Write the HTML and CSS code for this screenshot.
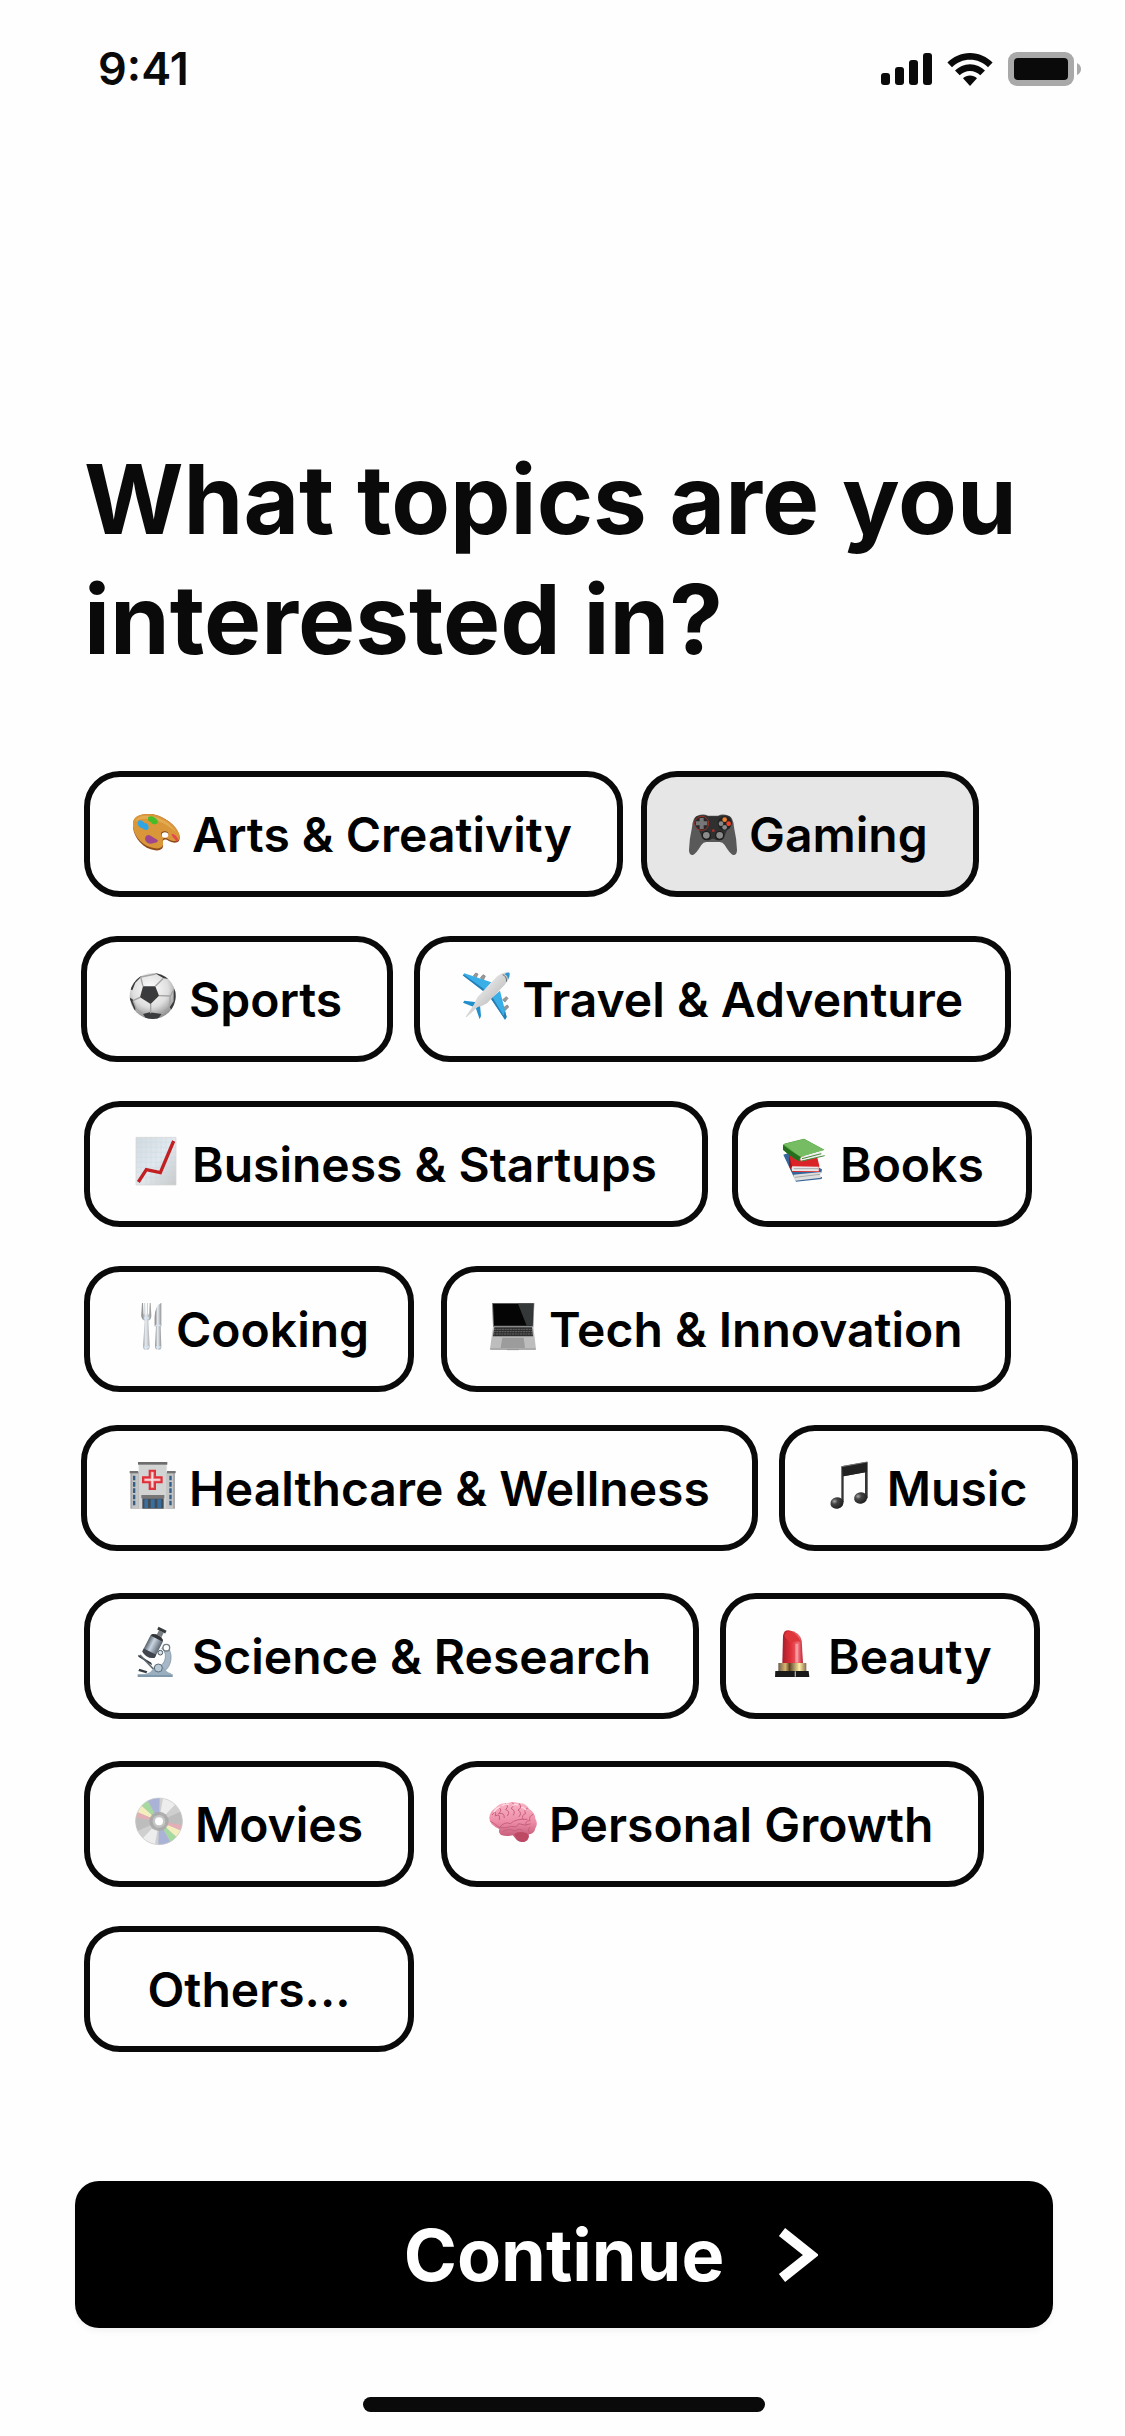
FILE: index.html
```html
<!DOCTYPE html>
<html lang="en">
<head>
  <meta charset="utf-8">
  <meta name="viewport" content="width=device-width, initial-scale=1">
  <title>Choose your topics</title>
  <link rel="stylesheet" href="styles.css">
</head>
<body class="screen">
  <header class="status">
    <span class="status__time">9:41</span>
    <div class="status__icons">
      <svg width="51" height="33" viewBox="0 0 51 33" fill="#0a0a0a" aria-hidden="true">
        <rect x="0" y="20" width="9" height="12" rx="3"/>
        <rect x="14" y="14" width="9" height="18" rx="3"/>
        <rect x="28" y="7" width="9" height="25" rx="3"/>
        <rect x="42" y="0" width="9" height="32" rx="3"/>
      </svg>
      <svg width="46" height="33" viewBox="0 0 46 33" fill="#0a0a0a" aria-hidden="true">
        <path d="M23 0C14 0 6 4 .4 9.600L5 14.200C10 9.300 16 6.700 23 6.700s13 2.600 18 7.500l4.600-4.600C40 4 32 0 23 0z"/>
        <path d="M23 11.300c-6 0-11 2.300-15 6.300l4.700 4.700c2.700-2.600 6.300-4.300 10.300-4.300s7.600 1.700 10.300 4.300l4.700-4.700c-4-4-9-6.300-15-6.300z"/>
        <path d="M23 22.500c-2.700 0-5 1-7 2.700L23 33l7-7.800c-2-1.700-4.300-2.700-7-2.700z"/>
      </svg>
      <svg width="73" height="34" viewBox="0 0 73 34" aria-hidden="true">
        <rect width="66" height="34" rx="9" fill="#a9a9a9"/>
        <rect x="6" y="6" width="54" height="22" rx="4" fill="#0a0a0a"/>
        <path d="M69 11q4 2 4 6t-4 6z" fill="#a9a9a9"/>
      </svg>
    </div>
  </header>

  <main class="content">
    <h1 class="title">What topics are you interested in?</h1>

    <div class="topics">
      <div class="row row--gap-s">
        <button type="button" class="chip chip--roomy" aria-pressed="false">
          <svg class="icon" viewBox="0 0 144 144" aria-hidden="true">
            <path d="M3 50C5 28 30 17 62 22c35 6 72 34 80 62 5 20-7 26-22 22-10-2-14-10-23-8-9 3-2 12-4 21-3 12-20 14-37 8C23 116 0 80 3 50z" fill="#8f4b1c"/>
            <path d="M3 47C5 25 30 18 62 22c35 6 72 34 80 60 4 18-7 23-22 19-10-2-14-10-23-8-9 3-2 12-4 21-3 11-20 13-37 7C23 110 0 78 3 47z" fill="#d9973a"/>
            <path d="M10 45c4-18 28-22 52-17 30 6 58 25 70 48-18-18-42-32-68-38C40 33 20 35 10 45z" fill="#e8b45c" opacity=".7"/>
            <path d="M17 46q4-9 13-5 6 8 16 9 8 12 0 18-7 4-15-4-16-4-14-18z" fill="#30a5e4"/>
            <path d="M48 31q10-7 20 1 11 6 9 15-5 8-16 3-4-6-12-9z" fill="#45bd28"/>
            <path d="M40 91q5-11 17-4 10 6 21 13-2 8-12 8-12 5-20-1-9-6-6-16z" fill="#a0468d"/>
            <path d="M118 82q6-4 13 4 8 6 8 16-7 3-9-4-8-5-12-16z" fill="#e4484d"/>
            <ellipse cx="98" cy="82" rx="11" ry="9" fill="#7c4318"/>
            <ellipse cx="99" cy="84" rx="10" ry="8" fill="#fff"/>
          </svg>
          Arts &amp; Creativity
        </button>
        <button type="button" class="chip chip--roomy chip--on" aria-pressed="true">
          <svg class="icon" viewBox="0 0 144 144" aria-hidden="true">
            <path d="M25 26q18-7 32 0h30q14-7 32 0 14 4 16 35 8 35 9 68 0 16-12 15-8-2-25-30-6-9-15-9H52q-9 0-15 9-17 28-25 30-12 1-12-15 1-33 9-68 2-31 16-35z" fill="#595959"/>
            <path d="M23 28q18-7 34 0h30q16-7 34 0 8 7 8 22l-12 12-13 31q-9 10-24 5-8-5-16 0-15 5-24-5L27 62 15 50q0-15 8-22z" fill="#303031"/>
            <circle cx="38" cy="49" r="21" fill="#29292a" stroke="#9e3226" stroke-width="3"/>
            <circle cx="107" cy="49" r="21" fill="#222223"/>
            <path d="M32 33h12v10h11v12H44v11H32V55H21V43h11z" fill="#777"/>
            <circle cx="107" cy="38" r="7" fill="#ef822a"/><circle cx="119" cy="50" r="7" fill="#f0442a"/>
            <circle cx="96" cy="50" r="7" fill="#888"/><circle cx="107" cy="61" r="7" fill="#888"/>
            <circle cx="52" cy="86" r="14" fill="#1d1d1e"/><circle cx="52" cy="85" r="10" fill="#8b8b8b"/>
            <circle cx="92" cy="86" r="14" fill="#1d1d1e"/><circle cx="92" cy="85" r="10" fill="#8b8b8b"/>
            <circle cx="73" cy="71" r="4" fill="#b92d27"/>
          </svg>
          Gaming
        </button>
      </div>

      <div class="row row--outdent">
        <button type="button" class="chip chip--roomy" aria-pressed="false">
          <svg class="icon" viewBox="0 0 144 144" aria-hidden="true">
            <defs>
              <radialGradient id="ball" cx=".45" cy=".35" r=".65"><stop offset="0" stop-color="#fff"/><stop offset=".6" stop-color="#dedede"/><stop offset="1" stop-color="#8d8d8d"/></radialGradient>
              <clipPath id="ball-edge"><circle cx="71" cy="72" r="69"/></clipPath>
            </defs>
            <circle cx="71" cy="72" r="69" fill="url(#ball)"/>
            <g clip-path="url(#ball-edge)" fill="#3a3b3d">
              <path d="M42 43h37l11 28-25 25-32-20z"/>
              <path d="M0 50l10-25 21-20 8 7-20 20-9 23zM72 0l42 8 10 14-20-3-22-13zM134 52l12-2-2 50-14 16-8-10 12-18zM42 126l20-5 36 5-16 20-30-5zM0 76l11 6 9 26-2 9z"/>
              <path d="M42 43L35 15M79 43l24-24M90 71l34 1 12-22M65 96v28M33 76L12 86M35 15L80 6M12 86l10 24 20 16M124 72l-3 32-24 22" fill="none" stroke="#a3a3a3" stroke-width="4"/>
            </g>
          </svg>
          Sports
        </button>
        <button type="button" class="chip" aria-pressed="false">
          <svg class="icon" viewBox="0 0 144 144" aria-hidden="true">
            <defs><linearGradient id="hull" x1="0" y1="0" x2="1" y2="1"><stop offset=".2" stop-color="#f6f6f6"/><stop offset=".6" stop-color="#c9c9c9"/><stop offset="1" stop-color="#707070"/></linearGradient></defs>
            <g fill="#999" stroke="#777" stroke-width="2"><path d="M34 12l7-9 7 3-6 13zM55 18l8-10 7 4-6 13zM122 83l11-9 5 5-9 11zM123 108l13-9 4 6-11 11z"/></g>
            <path d="M2 10L7 4l81 27-23 26z" fill="#3aaee6"/>
            <path d="M2 10l61 47 4-5L7 9z" fill="#247fb4"/>
            <path d="M114 56l20 79-5 8-42-64z" fill="#3aaee6"/>
            <path d="M129 143l5-8-5-18-4 14-34-56-6 3z" fill="#247fb4"/>
            <path d="M3 92l4-6 38 5-8 15zM41 107l13-8 3 33-4 10z" fill="#218fcb"/>
            <path d="M11 134l26-38q5-19 19-31L104 14Q126-4 142 2q4 15-15 38L75 94q-16 10-28 11L14 135z" fill="url(#hull)"/>
            <path d="M127 7q10 3 11 16 7-13 4-21-7-2-15 5z" fill="#2e94cd"/>
            <path d="M122 8q12 4 12 21" fill="none" stroke="#666" stroke-width="3"/>
          </svg>
          Travel &amp; Adventure
        </button>
      </div>

      <div class="row row--gap-l">
        <button type="button" class="chip chip--roomy" aria-pressed="false">
          <svg class="icon" viewBox="0 0 144 144" aria-hidden="true">
            <defs><linearGradient id="paper" x1="0" y1="0" x2="1" y2="1"><stop offset="0" stop-color="#d2dadf"/><stop offset=".5" stop-color="#e2e9ee"/><stop offset="1" stop-color="#c9c9c9"/></linearGradient></defs>
            <path d="M12 1h120v143H12z" fill="url(#paper)" stroke="#d4d4d4" stroke-width="2"/>
            <path d="M13 16h118M13 31h118M13 46h118M13 61h118M13 76h118M13 91h118M13 106h118M13 121h118M27 2v141M42 2v141M57 2v141M72 2v141M87 2v141M102 2v141M117 2v141" stroke="#c6dae6" stroke-width="2" opacity=".6"/>
            <path d="M19 135l24-37 42 9 40-95" fill="none" stroke="#c21f22" stroke-width="10"/>
          </svg>
          Business &amp; Startups
        </button>
        <button type="button" class="chip" aria-pressed="false">
          <svg class="icon" viewBox="0 0 144 144" aria-hidden="true">
            <path d="M10 53l18-6 98 50-2 10-30 10 32 3-1 6-77 8z" fill="#35669b"/>
            <path d="M41 113l82-8q-5 9 0 17l-76 9q-9-9-6-18z" fill="#dedede"/>
            <path d="M44 121l76-9" stroke="#aaa" stroke-width="3"/>
            <path d="M27 50l85 12 6 24q-2 8 0 19H38L27 86z" fill="#db2427"/>
            <path d="M27 53l9 35v17L27 86z" fill="#9b1820"/>
            <path d="M37 88l79 1v14l-80-1q-4-9 1-14z" fill="#e8e8e8"/>
            <path d="M41 95h74" stroke="#aaa" stroke-width="3"/>
            <path d="M9 25q0-5 9-6l54-14 61 33-68 20-7 15Q35 61 9 38z" fill="#3f9630"/>
            <path d="M10 22L72 6l61 33-68 20q-4 0-9-3z" fill="#75bc62"/>
            <path d="M65 59l60-16q-5 9 3 14l-65 15q-5-7 2-13z" fill="#eee"/>
            <path d="M66 65l58-15M62 73l72-17" stroke="#4a8c3b" stroke-width="3"/>
            <path d="M9 25v13q26 23 49 35l2-14Q34 45 9 25z" fill="#256d1d"/>
          </svg>
          Books
        </button>
      </div>

      <div class="row row--gap-xl">
        <button type="button" class="chip chip--snug" aria-pressed="false">
          <svg class="icon icon--slim" viewBox="0 0 96 144" aria-hidden="true">
            <defs><linearGradient id="steel"><stop offset="0" stop-color="#777"/><stop offset=".45" stop-color="#e7edf3"/><stop offset="1" stop-color="#929292"/></linearGradient></defs>
            <path d="M30 3h3l2 34h2V3h3l1 34h3l1-34h3v34h3l2-34h3l2 39q-1 12-9 14l4 78q-1 10-10 10t-10-10l5-78q-9-3-10-15z" fill="url(#steel)"/>
            <path d="M88 2q-19 9-20 42v29h4l-3 62q2 9 10 9t9-9l-2-62h2z" fill="url(#steel)"/>
            <path d="M35 135h16M71 135h15M36 48h15M70 70h16" stroke="#d5e5f6" stroke-width="4"/>
          </svg>
          Cooking
        </button>
        <button type="button" class="chip" aria-pressed="false">
          <svg class="icon" viewBox="0 0 144 144" aria-hidden="true">
            <path d="M9 3h127l-3 73H12z" fill="#777"/>
            <path d="M12 5h121l-3 66H15z" fill="#050505"/>
            <path d="M87 5h46l-3 66h-17z" fill="#343839"/>
            <path d="M12 74h121l8 67q0 3-5 3H8q-5 0-5-3z" fill="#bdbdbd"/>
            <path d="M16 76h113l3 27H12z" fill="#2e2e2e"/>
            <path d="M15 82h115M14 89h117M13 96h119" stroke="#858585" stroke-width="2" stroke-dasharray="6 2"/>
            <path d="M40 107h64l4 31H35z" fill="#9c9c9c"/>
            <path d="M3 141h138M54 143h36" stroke="#898989" stroke-width="2"/>
          </svg>
          Tech &amp; Innovation
        </button>
      </div>

      <div class="row row--outdent row--near">
        <button type="button" class="chip" aria-pressed="false">
          <svg class="icon" viewBox="0 0 144 144" aria-hidden="true">
            <path d="M4 34h134v109H4z" fill="#aaa"/>
            <path d="M2 30h26v7H2zM114 30h26v7h-26z" fill="#737373"/>
            <path d="M10 38h18v105H10zM114 38h18v105h-18z" fill="#c5c5c5"/>
            <path d="M12 44h7v14h-7zm0 19h7v14h-7zm0 19h7v14h-7zm0 19h7v14h-7zm0 18h7v14h-7zM121 44h7v14h-7zm0 19h7v14h-7zm0 19h7v14h-7zm0 19h7v14h-7zm0 18h7v14h-7z" fill="#315e86"/>
            <path d="M29 8h84v135H29z" fill="#d2d3d3"/>
            <path d="M27 3h88v8H27z" fill="#6d6d6d"/>
            <path d="M59 26h22v20h20v21H81v20H59V67H39V46h20z" fill="#df3039"/>
            <path d="M66 33h8v20h20v7H74v20h-8V60H46v-7h20z" fill="#f7dddf" stroke="#f08085" stroke-width="2"/>
            <path d="M37 102h69v10H37z" fill="#777"/>
            <path d="M40 112h64v31H40z" fill="#424b54"/>
            <path d="M46 115h11v26H46zm19 0h12v26H65zm20 0h12v26H85z" fill="#396f9e"/>
          </svg>
          Healthcare &amp; Wellness
        </button>
        <button type="button" class="chip chip--roomy" aria-pressed="false">
          <svg class="icon" viewBox="0 0 144 144" aria-hidden="true">
            <defs><radialGradient id="note" cx=".35" cy=".3" r=".7"><stop offset="0" stop-color="#aaa"/><stop offset=".35" stop-color="#444"/><stop offset="1" stop-color="#202020"/></radialGradient></defs>
            <path d="M43 16l79-14v110h-8V34L50 46v77h-7z" fill="#353535"/>
            <path d="M45 18l75-14v29L49 46z" fill="#222"/>
            <path d="M44 17l76-14" stroke="#737373" stroke-width="3"/>
            <ellipse cx="30" cy="126" rx="20" ry="17" fill="url(#note)" transform="rotate(-15 30 126)"/>
            <ellipse cx="101" cy="111" rx="20" ry="17" fill="url(#note)" transform="rotate(-15 101 111)"/>
          </svg>
          Music
        </button>
      </div>

      <div class="row row--far">
        <button type="button" class="chip" aria-pressed="false">
          <svg class="icon" viewBox="0 0 144 144" aria-hidden="true">
            <defs><linearGradient id="tube"><stop offset="0" stop-color="#57616b"/><stop offset=".4" stop-color="#c9d5e2"/><stop offset="1" stop-color="#59636d"/></linearGradient></defs>
            <path d="M100 47q20 18 17 44-3 25-23 38H69l13-15q21-15 18-38-2-12-11-18z" fill="#a6b8c8" stroke="#788894" stroke-width="2"/>
            <path d="M17 136h105v8H17z" fill="#8098ab"/>
            <path d="M34 136q28-4 32-24 16-15 29 1 6 16 22 20v5H34z" fill="#99afc0"/>
            <circle cx="79" cy="117" r="12" fill="#b9c9d6" stroke="#5d6c78" stroke-width="3"/>
            <path d="M19 77l39 24 2 8-41-26zM22 119l24 8-3 6-24-7z" fill="#353b40"/>
            <path d="M24 78l40 42" stroke="#606a72" stroke-width="5"/>
            <g transform="rotate(27 60 54)">
              <rect x="40" y="20" width="42" height="62" rx="7" fill="url(#tube)"/>
              <path d="M42 20q19-12 38 0v5H42z" fill="#313337"/>
              <path d="M40 69h42v10q-21 15-42 0z" fill="#41464f"/>
              <path d="M56 0h16v15H56z" fill="#777d82"/><path d="M50-9h27v9H50z" fill="#373a3d"/>
            </g>
            <circle cx="103" cy="56" r="10" fill="#fff" stroke="#6f7b84" stroke-width="4"/>
            <circle cx="85" cy="71" r="7" fill="#dce3e8" stroke="#4e5860" stroke-width="3"/>
          </svg>
          Science &amp; Research
        </button>
        <button type="button" class="chip" aria-pressed="false">
          <svg class="icon" viewBox="0 0 144 144" aria-hidden="true">
            <defs>
              <linearGradient id="gold"><stop offset="0" stop-color="#6d5c4c"/><stop offset=".25" stop-color="#d8b66d"/><stop offset=".4" stop-color="#5e4425"/><stop offset=".75" stop-color="#fff0a5"/><stop offset="1" stop-color="#876b52"/></linearGradient>
              <linearGradient id="rouge"><stop offset="0" stop-color="#a51f2b"/><stop offset=".4" stop-color="#df3039"/><stop offset=".8" stop-color="#ef6873"/><stop offset="1" stop-color="#b82231"/></linearGradient>
            </defs>
            <path d="M43 102l2-82Q48 3 62 4q33 5 39 31l4 67z" fill="url(#rouge)"/>
            <path d="M49 21Q53 6 65 8q27 7 32 30-19-4-27 5-17-15-21-22z" fill="#de363b"/>
            <path d="M82 44h9v57h-9z" fill="#f49aa1"/>
            <path d="M31 102h84v25H31z" fill="url(#gold)"/>
            <path d="M22 126h100l2 18H21z" fill="#191919"/>
            <path d="M82 127v16" stroke="#aaa" stroke-width="4"/>
          </svg>
          Beauty
        </button>
      </div>

      <div class="row row--gap-xl row--far">
        <button type="button" class="chip chip--wide" aria-pressed="false">
          <svg class="icon" viewBox="0 0 144 144" aria-hidden="true">
            <circle cx="72" cy="73" r="70" fill="#cfcfcf"/>
            <path d="M72 73L8 102Q-4 75 6 48zM72 73l64-29q12 27 2 54z" fill="#bdbdbd"/>
            <path d="M72 73L84 4q24 5 36 19zM72 73l-12 69q-24-5-36-19z" fill="#ededed"/>
            <path d="M72 73L8 46q4-11 12-20zM72 73l64 27q-4 11-12 20z" fill="#f4edbd"/>
            <path d="M72 73L20 26q8-9 18-15zM72 73l52 47q-8 9-18 15z" fill="#a5d9a0"/>
            <path d="M72 73L38 11Q54 2 74 3zM72 73l34 62q-16 9-36 8z" fill="#aab3d6"/>
            <path d="M72 73L4 62l4-16zM72 73l68 11-4 16z" fill="#e4aeb6"/>
            <circle cx="72" cy="73" r="70" fill="none" stroke="#ccc" stroke-width="2"/>
            <circle cx="72" cy="73" r="29" fill="#a7a7a7" opacity=".9"/>
            <circle cx="72" cy="73" r="19" fill="#c5c5c5"/><circle cx="72" cy="73" r="12" fill="#fff"/>
          </svg>
          Movies
        </button>
        <button type="button" class="chip chip--roomy" aria-pressed="false">
          <svg class="icon" viewBox="0 0 144 144" aria-hidden="true">
            <defs><linearGradient id="brain" x1="0" y1="0" x2="0" y2="1"><stop offset="0" stop-color="#f9b4c4"/><stop offset=".5" stop-color="#ed8ca7"/><stop offset="1" stop-color="#b84b69"/></linearGradient></defs>
            <path d="M1 62q2-20 18-29Q32 16 54 19q19-8 35 0 20-3 32 17 17 11 18 29 9 14 0 29-3 17-19 18-2 16-14 22-12 4-22-4l-13-15q-18 5-35-1-9-7-5-18Q0 84 1 62z" fill="url(#brain)"/>
            <path d="M75 112q15-13 38-3l7 8q-2 16-16 18-13 0-20-9z" fill="#bd4965"/>
            <g fill="none" stroke="#c8607d" stroke-width="3" stroke-linecap="round">
              <path d="M10 53q13-18 9 4 16-10 12 11M29 31q13 7 0 19 17-5 17 12M49 20q13 5 1 18 15 4 6 18M70 17q10 8-4 17 16 8 7 20M91 20q10 12-4 19 14 9 3 20M115 34q-12 4-5 16-14 4-8 17M132 52q-14 6-9 19-16 0-12 13M5 73q16 9 26 19 16-20 33-12 17-16 50-13M31 92q21 3 36-4 18 5 22-8 19 8 35 1M42 103q20-10 35-1 16-10 24-1M123 91q-10 9 0 19"/>
            </g>
            <path d="M15 45q6-12 17-15M40 26q9-7 18-3M72 25q8-5 14-1M98 31q8 0 12 7" fill="none" stroke="#ffdae2" stroke-width="4" stroke-linecap="round"/>
          </svg>
          Personal Growth
        </button>
      </div>

      <div class="row">
        <button type="button" class="chip chip--wide" aria-pressed="false">Others...</button>
      </div>
    </div>
  </main>

  <footer class="footer">
    <button type="button" class="continue">
      <span class="continue__label">Continue</span>
      <svg class="continue__arrow" width="40" height="54" viewBox="0 0 40 54" aria-hidden="true">
        <path d="M4 4l29 23L4 50" fill="none" stroke="#fff" stroke-width="10"/>
      </svg>
    </button>
    <div class="home-bar"></div>
  </footer>
</body>
</html>
```
FILE: styles.css
```css
* {
  box-sizing: border-box;
}

.screen {
  margin: 0;
  min-height: 100vh;
  background: #fefefe;
  color: #0a0a0a;
  font-family: Inter, "Liberation Sans", sans-serif;
}

.status {
  display: flex;
  align-items: center;
  justify-content: space-between;
  padding: 42px 44px 0 98px;
}

.status__time {
  font-size: 45px;
  line-height: 54px;
  font-weight: 600;
}

.status__icons {
  display: flex;
  align-items: center;
  gap: 15px;
}

.content {
  padding: 343px 48px 0 84px;
}

.title {
  margin: 0;
  font-size: 96px;
  line-height: 120px;
  font-weight: 700;
}

.topics {
  display: flex;
  flex-direction: column;
  margin-top: 92px;
}

.row {
  display: flex;
  gap: 21px;
}

.row + .row {
  margin-top: 39px;
}

.row + .row--near {
  margin-top: 33px;
}

.row + .row--far {
  margin-top: 42px;
}

.row--gap-s {
  gap: 18px;
}

.row--gap-l {
  gap: 24px;
}

.row--gap-xl {
  gap: 27px;
}

.row--outdent {
  margin-left: -3px;
}

.chip {
  display: flex;
  align-items: center;
  justify-content: center;
  gap: 12px;
  padding: 28px 42px 26px;
  border: 6px solid #0a0a0a;
  border-radius: 36px;
  background: #fefefe;
  color: #000;
  font-family: inherit;
  font-size: 48px;
  line-height: 60px;
  font-weight: 600;
  white-space: nowrap;
}

.chip--snug {
  padding-right: 39px;
}

.chip--roomy {
  padding-right: 45px;
}

.chip--on {
  background: #e6e6e6;
}

.chip--wide {
  min-width: 330px;
}

.icon {
  width: 48px;
  height: 48px;
  flex: none;
  margin-bottom: 8px;
  overflow: visible;
}

.icon--slim {
  width: 32px;
}

.footer {
  display: flex;
  flex-direction: column;
  align-items: center;
  padding: 129px 72px 24px 75px;
}

.continue {
  display: grid;
  grid-template-columns: 1fr auto 1fr;
  align-items: center;
  width: 100%;
  padding: 30px 0;
  border: 0;
  border-radius: 24px;
  background: #000;
  box-shadow: 0 3px 6px rgba(0, 0, 0, 0.05);
  color: #fff;
  font-family: inherit;
  font-size: 72px;
  line-height: 87px;
  font-weight: 700;
}

.continue__label {
  grid-column: 2;
}

.continue__arrow {
  margin-left: 54px;
}

.home-bar {
  width: 402px;
  height: 15px;
  margin-top: 69px;
  border-radius: 8px;
  background: #0a0a0a;
}
```
